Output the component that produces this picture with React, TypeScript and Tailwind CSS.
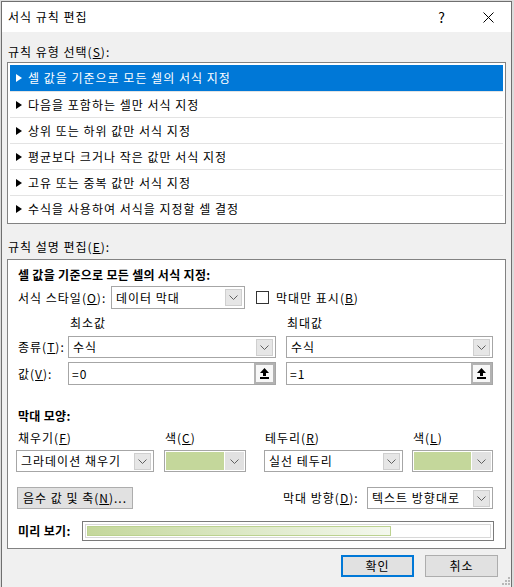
import React from "react";

const rules = [
  "셀 값을 기준으로 모든 셀의 서식 지정",
  "다음을 포함하는 셀만 서식 지정",
  "상위 또는 하위 값만 서식 지정",
  "평균보다 크거나 작은 값만 서식 지정",
  "고유 또는 중복 값만 서식 지정",
  "수식을 사용하여 서식을 지정할 셀 결정",
];

function Chevron() {
  return (
    <svg width="9" height="5" viewBox="0 0 9 5">
      <polyline points="0.5,0.5 4.5,4.5 8.5,0.5" fill="none" stroke="#606060" strokeWidth="1" />
    </svg>
  );
}

function DropBtn() {
  return (
    <div className="w-[17px] h-[17px] shrink-0 bg-[#e6e6e6] border border-[#cfcfcf] flex items-center justify-center">
      <Chevron />
    </div>
  );
}

function Select({ text, className }: { text: string; className: string }) {
  return (
    <div className={"flex items-center bg-white border border-[#a6a6a6] pl-[4px] pr-[2px] shrink-0 " + className}>
      <span className="flex-1 whitespace-nowrap">{text}</span>
      <DropBtn />
    </div>
  );
}

function ColorSelect({ className }: { className: string }) {
  return (
    <div className={"flex items-center gap-[1px] bg-white border border-[#a6a6a6] p-[1px] shrink-0 " + className}>
      <div className="flex-1 h-full bg-[#c4d79b]" />
      <div className="w-[19px] h-full bg-[#e1e1e1] flex items-center justify-center">
        <Chevron />
      </div>
    </div>
  );
}

function UpArrow() {
  return (
    <svg width="9" height="11" viewBox="0 0 9 11">
      <path d="M4.5 0 L9 5 H6 V8 H3 V5 H0 Z" fill="#000" />
      <rect x="0" y="9" width="9" height="2" fill="#000" />
    </svg>
  );
}

function RefInput({ text, className }: { text: string; className: string }) {
  return (
    <div className={"flex items-center bg-white border border-[#a6a6a6] pl-[3px] shrink-0 " + className}>
      <span className="flex-1">{text}</span>
      <div className="w-[21px] h-full border-2 border-[#b2b2b2] bg-[#f7f7f7] flex items-center justify-center">
        <UpArrow />
      </div>
    </div>
  );
}

export default function App() {
  return (
    <div className="w-[514px] h-[587px] bg-[#dcdcdc] pt-px pl-px overflow-hidden font-['Noto_Sans_CJK_KR','Noto_Sans',sans-serif] text-[12px] leading-[16px] tracking-[1px] text-black">
      <div className="relative w-[511px] h-[586px] border border-b-0 border-[#6f6f6f] bg-[#f0f0f0] flex flex-col">
        {/* Title bar */}
        <div className="h-[30px] bg-white flex items-center shrink-0">
          <span className="pl-[6px] flex-1">서식 규칙 편집</span>
          <div className="w-[46px] h-full flex items-center justify-center text-[14px]">?</div>
          <div className="w-[46px] h-full flex items-center justify-center">
            <svg width="11" height="11" viewBox="0 0 11 11">
              <path d="M0.5 0.5 L10.5 10.5 M10.5 0.5 L0.5 10.5" stroke="#000" strokeWidth="1" />
            </svg>
          </div>
        </div>

        <div className="px-[5px]">
          <div className="mt-[12px] pl-px">
            규칙 유형 선택(<u>S</u>):
          </div>

          {/* Rule type list */}
          <div className="mt-[2px] h-[162px] bg-white border border-[#828282] p-[2px]">
            {rules.map((r, i) => (
              <div
                key={r}
                className={
                  i === 0
                    ? "h-[26px] flex items-center bg-[#0078d7] text-white"
                    : "h-[26px] flex items-center border-t border-[#e3e3e3]"
                }
              >
                <svg width="6" height="8" viewBox="0 0 6 8" className="ml-[6px] mr-[6px]">
                  <polygon points="0,0 6,4 0,8" fill={i === 0 ? "#fff" : "#000"} />
                </svg>
                <span>{r}</span>
              </div>
            ))}
          </div>

          <div className="mt-[15px] pl-px">
            규칙 설명 편집(<u>E</u>):
          </div>

          {/* Rule description panel */}
          <div className="mt-[4px] h-[290px] bg-white border border-[#828282] flex flex-col">
            <div className="mt-[7px] pl-[10px] font-bold tracking-[0.3px]">셀 값을 기준으로 모든 셀의 서식 지정:</div>

            <div className="mt-[3px] flex items-center pl-[10px] h-[23px]">
              <span className="w-[93px] whitespace-nowrap">
                서식 스타일(<u>O</u>):
              </span>
              <Select text="데이터 막대" className="w-[134px] h-[23px]" />
              <div className="ml-[11px] w-[13px] h-[13px] border border-[#333] bg-white" />
              <span className="ml-[7px]">
                막대만 표시(<u>B</u>)
              </span>
            </div>

            <div className="mt-[6px] flex">
              <span className="ml-[62px] w-[217px]">최소값</span>
              <span>최대값</span>
            </div>

            <div className="mt-[5px] flex items-center pl-[10px]">
              <span className="w-[50px] whitespace-nowrap">
                종류(<u>T</u>):
              </span>
              <Select text="수식" className="w-[208px] h-[22px]" />
              <Select text="수식" className="ml-[10px] w-[207px] h-[22px]" />
            </div>

            <div className="mt-[4px] flex items-center pl-[10px]">
              <span className="w-[50px] whitespace-nowrap">
                값(<u>V</u>):
              </span>
              <RefInput text="=0" className="w-[208px] h-[23px]" />
              <RefInput text="=1" className="ml-[10px] w-[207px] h-[23px]" />
            </div>

            <div className="mt-[23px] pl-[10px] font-bold tracking-[0.3px]">막대 모양:</div>

            <div className="mt-[6px] flex">
              <span className="ml-[10px] w-[147px]">
                채우기(<u>F</u>)
              </span>
              <span className="w-[100px]">
                색(<u>C</u>)
              </span>
              <span className="w-[148px]">
                테두리(<u>R</u>)
              </span>
              <span>
                색(<u>L</u>)
              </span>
            </div>

            <div className="mt-[4px] flex items-center pl-[8px]">
              <Select text="그라데이션 채우기" className="w-[138px] h-[22px]" />
              <ColorSelect className="ml-[10px] w-[82px] h-[22px]" />
              <Select text="실선 테두리" className="ml-[18px] w-[139px] h-[22px]" />
              <ColorSelect className="ml-[9px] w-[81px] h-[22px]" />
            </div>

            <div className="mt-[15px] flex items-center pl-[9px]">
              <div className="w-[116px] h-[22px] bg-[#e1e1e1] border border-[#adadad] flex items-center justify-center whitespace-nowrap">
                음수 값 및 축(<u>N</u>)...
              </div>
              <span className="ml-[150px] w-[84px] whitespace-nowrap">
                막대 방향(<u>D</u>):
              </span>
              <Select text="텍스트 방향대로" className="w-[126px] h-[22px]" />
            </div>

            <div className="mt-[12px] flex items-center pl-[10px]">
              <span className="w-[64px] font-bold tracking-[0.3px]">미리 보기:</span>
              <div className="w-[412px] h-[20px] border border-[#7a7a7a] p-[2px]">
                <div className="h-full border border-[#d8d8d8] p-px">
                  <div className="w-[304px] h-full bg-linear-to-r from-[#c4d79b] to-[#f4f8ee] border border-[#bcd290]" />
                </div>
              </div>
            </div>
          </div>
        </div>

        {/* Buttons */}
        <div className="mt-[6px] flex justify-end pr-[13px] gap-[11px]">
          <div className="w-[73px] h-[22px] bg-[#e1e1e1] border-2 border-[#0078d7] flex items-center justify-center">
            확인
          </div>
          <div className="w-[73px] h-[22px] bg-[#e1e1e1] border border-[#adadad] flex items-center justify-center">
            취소
          </div>
        </div>

        {/* Size grip */}
        <svg width="8" height="8" viewBox="0 0 8 8" className="absolute right-[1px] bottom-[2px]">
          <rect x="6" y="0" width="2" height="2" fill="#b8b8b8" />
          <rect x="3" y="3" width="2" height="2" fill="#b8b8b8" />
          <rect x="6" y="3" width="2" height="2" fill="#b8b8b8" />
          <rect x="0" y="6" width="2" height="2" fill="#b8b8b8" />
          <rect x="3" y="6" width="2" height="2" fill="#b8b8b8" />
          <rect x="6" y="6" width="2" height="2" fill="#b8b8b8" />
        </svg>
      </div>
    </div>
  );
}
